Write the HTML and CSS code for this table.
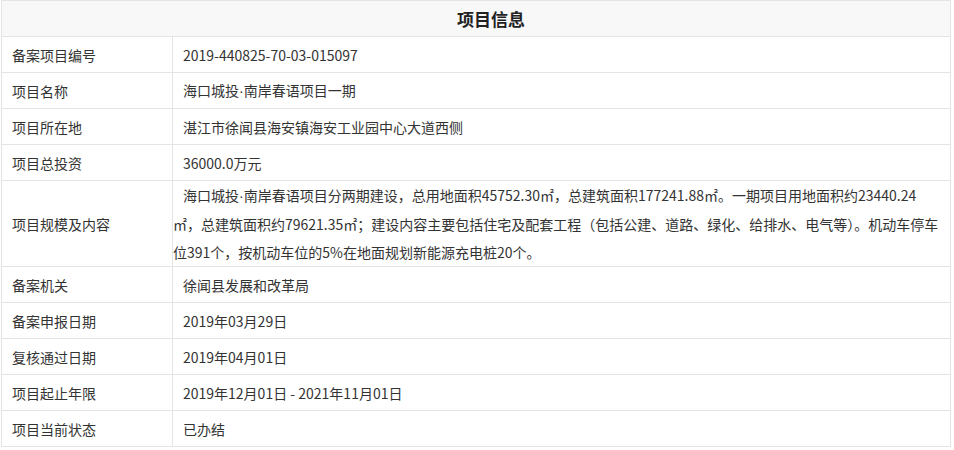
FILE: index.html
```html
<!DOCTYPE html>
<html lang="zh-CN">
<head>
<meta charset="utf-8">
<title>项目信息</title>
<link rel="stylesheet" href="styles.css">
</head>
<body>
<div class="wrap">
<table class="info">
  <colgroup><col class="c-label"><col class="c-value"></colgroup>
  <thead>
    <tr><th colspan="2" class="title">项目信息</th></tr>
  </thead>
  <tbody>
    <tr><td class="label">备案项目编号</td><td class="value">2019-440825-70-03-015097</td></tr>
    <tr><td class="label">项目名称</td><td class="value">海口城投<span class="dot">·</span>南岸春语项目一期</td></tr>
    <tr><td class="label">项目所在地</td><td class="value">湛江市徐闻县海安镇海安工业园中心大道西侧</td></tr>
    <tr><td class="label">项目总投资</td><td class="value">36000.0万元</td></tr>
    <tr class="tall"><td class="label">项目规模及内容</td><td class="value">海口城投<span class="dot">·</span>南岸春语项目分两期建设，总用地面积45752.30㎡，总建筑面积177241.88㎡。一期项目用地面积约23440.24<br>㎡，总建筑面积约79621.35㎡；建设内容主要包括住宅及配套工程（包括公建、道路、绿化、给排水、电气等）。机动车停车<br>位391个，按机动车位的5%在地面规划新能源充电桩20个。</td></tr>
    <tr><td class="label">备案机关</td><td class="value">徐闻县发展和改革局</td></tr>
    <tr><td class="label">备案申报日期</td><td class="value">2019年03月29日</td></tr>
    <tr><td class="label">复核通过日期</td><td class="value">2019年04月01日</td></tr>
    <tr><td class="label">项目起止年限</td><td class="value">2019年12月01日 - 2021年11月01日</td></tr>
    <tr><td class="label">项目当前状态</td><td class="value">已办结</td></tr>
  </tbody>
</table>
</div>
</body>
</html>
```
FILE: styles.css
```css
html, body {
  margin: 0;
  padding: 0;
  background: #fff;
}
.wrap {
  padding-left: 1px;
}
.info {
  width: 950px;
  border-collapse: collapse;
  table-layout: fixed;
  font-family: "Noto Sans CJK SC", "Microsoft YaHei", sans-serif;
  font-size: 14px;
  color: #333;
}
.c-label { width: 171px; }
.info th, .info td {
  border: 1px solid #e4e4e4;
  height: 35px;
  padding: 0;
  line-height: 28px;
  vertical-align: middle;
  text-align: left;
}
.info .title {
  background: #f8f8f8;
  text-align: center;
  font-size: 17px;
  font-weight: bold;
  color: #222;
  padding-left: 30px;
}
.info .label {
  padding-left: 10px;
}
.info .value {
  text-indent: 10px;
  padding-right: 4px;
  white-space: nowrap;
}
.dot {
  font-family: "Liberation Sans", sans-serif;
}
```
